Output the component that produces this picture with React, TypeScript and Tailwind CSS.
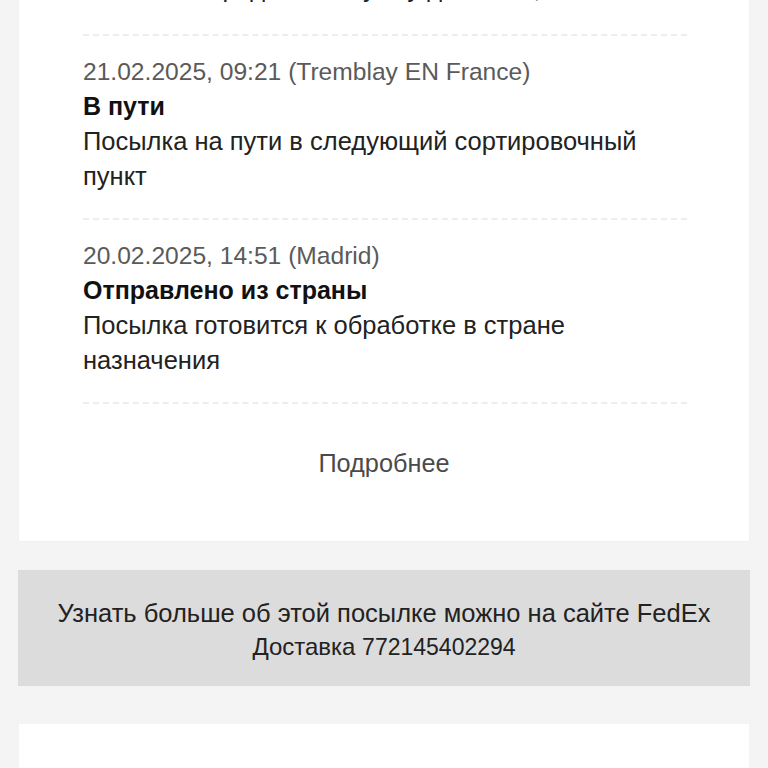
const events = [
  {
    date: '21.02.2025, 09:21 (Tremblay EN France)',
    title: 'В пути',
    text: 'Посылка на пути в следующий сортировочный пункт',
  },
  {
    date: '20.02.2025, 14:51 (Madrid)',
    title: 'Отправлено из страны',
    text: 'Посылка готовится к обработке в стране назначения',
  },
];

export default function App() {
  return (
    <div
      className="min-h-screen bg-[#f4f4f4] overflow-hidden pb-10"
      style={{ fontFamily: '"Liberation Sans", Arial, sans-serif' }}
    >
      <div className="mx-[19px] -mt-[29px] bg-white shadow-[0_0_1px_rgba(0,0,0,0.08)]">
        <div className="pl-[64px] pr-[62px]">
          <p className="text-[25.5px] leading-[35px] text-[#222] pb-[28px]">
            Посылка передана в службу доставки,
          </p>
          {events.map((e) => (
            <div key={e.date}>
              <div className="border-t-[2px] border-dashed border-[#ededed]" />
              <div className="pt-[18px] pb-[24px] leading-[35px]">
                <p className="text-[24.6px] text-[#5a5a5a]">{e.date}</p>
                <p className="text-[25px] font-bold text-[#111]">{e.title}</p>
                <p className="text-[25.5px] text-[#222]">{e.text}</p>
              </div>
            </div>
          ))}
          <div className="border-t-[2px] border-dashed border-[#ededed]" />
        </div>
        <div className="pt-[42px] pb-[60px] text-center text-[25.3px] leading-[35px] text-[#4a4a4a]">
          Подробнее
        </div>
      </div>

      <div className="mx-[18px] mt-[29px] bg-[#dcdcdc] pt-[26px] pb-[22px] text-center leading-[34px] text-[#222]">
        <p className="text-[25.5px]">Узнать больше об этой посылке можно на сайте FedEx</p>
        <p className="text-[24px]">
          Доставка <span className="text-[23px]">772145402294</span>
        </p>
      </div>

      <div className="mx-[19px] mt-[38px] h-[120px] bg-white" />
    </div>
  );
}
